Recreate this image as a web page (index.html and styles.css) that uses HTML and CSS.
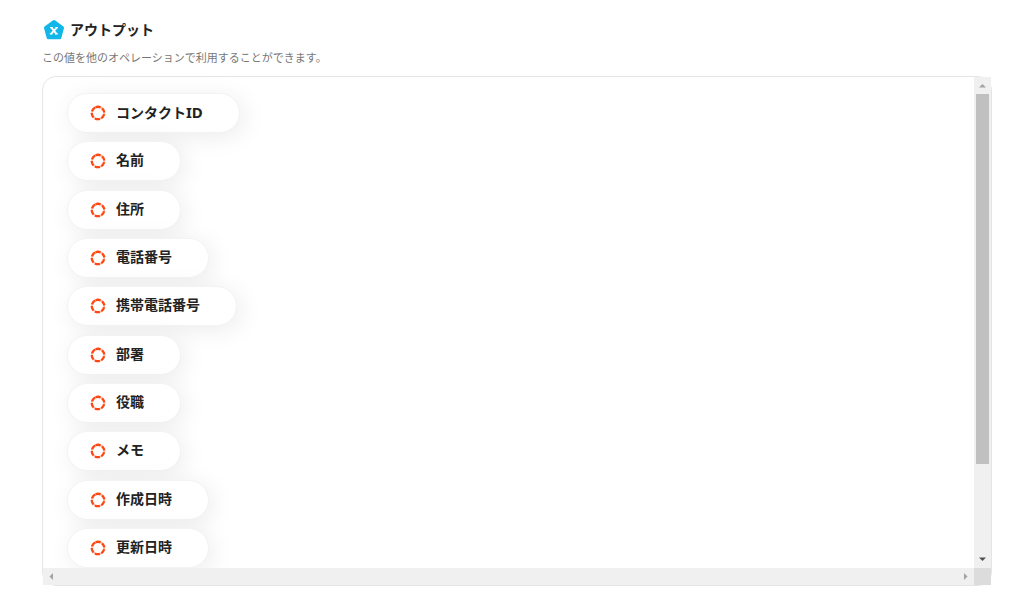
FILE: index.html
```html
<!DOCTYPE html>
<html lang="ja">
<head>
    <meta charset="UTF-8">
    <meta name="viewport" content="width=device-width, initial-scale=1.0">
    <title>アウトプット</title>
    <link rel="stylesheet" href="styles.css">
</head>
<body>
    <!-- shared ring icon -->
    <svg class="icon-defs" aria-hidden="true">
        <symbol id="ring" viewBox="0 0 16 16">
            <circle cx="8" cy="8" r="6.2" fill="none" stroke="#ffc4b2" stroke-width="2"/>
            <circle cx="8" cy="8" r="6.2" fill="none" stroke="#ff4713" stroke-width="2.3" stroke-dasharray="4.9 1.593" transform="rotate(-112 8 8)"/>
        </symbol>
    </svg>

    <main class="output-section">
        <header class="section-header">
            <svg class="section-icon" viewBox="0 0 22 22" aria-hidden="true">
                <path d="M11 2.5 L19.5 8.8 L16.8 18.8 H5.2 L2.5 8.8 Z" fill="#12b7e8" stroke="#12b7e8" stroke-width="3" stroke-linejoin="round"/>
                <path d="M8.4 8.6 L13.4 14.8 M13.8 8.6 L8 14.8" fill="none" stroke="#fff" stroke-width="1.9"/>
                <path d="M7 8.6 H9.8 M12.4 8.6 H14.8 M6.8 14.8 H9.4 M12 14.8 H14.8" fill="none" stroke="#fff" stroke-width="1.3"/>
            </svg>
            <h1 class="section-title">アウトプット</h1>
        </header>
        <p class="section-description">この値を他のオペレーションで利用することができます。</p>

        <div class="output-panel">
            <ul class="output-list">
                <li class="chip"><svg class="chip-icon"><use href="#ring"/></svg><span>コンタクト<span class="latin">ID</span></span></li>
                <li class="chip"><svg class="chip-icon"><use href="#ring"/></svg>名前</li>
                <li class="chip"><svg class="chip-icon"><use href="#ring"/></svg>住所</li>
                <li class="chip"><svg class="chip-icon"><use href="#ring"/></svg>電話番号</li>
                <li class="chip"><svg class="chip-icon"><use href="#ring"/></svg>携帯電話番号</li>
                <li class="chip"><svg class="chip-icon"><use href="#ring"/></svg>部署</li>
                <li class="chip"><svg class="chip-icon"><use href="#ring"/></svg>役職</li>
                <li class="chip"><svg class="chip-icon"><use href="#ring"/></svg>メモ</li>
                <li class="chip"><svg class="chip-icon"><use href="#ring"/></svg>作成日時</li>
                <li class="chip"><svg class="chip-icon"><use href="#ring"/></svg>更新日時</li>
            </ul>
            <div class="scrollbar vertical">
                <button class="scroll-button disabled" aria-label="上へスクロール"><svg viewBox="0 0 17 17"><path d="M5 10.5 L8.5 7 L12 10.5 Z"/></svg></button>
                <div class="scroll-track"><div class="scroll-thumb"></div></div>
                <button class="scroll-button" aria-label="下へスクロール"><svg viewBox="0 0 17 17"><path d="M5 6.5 L8.5 10 L12 6.5 Z"/></svg></button>
            </div>
            <div class="scrollbar horizontal">
                <button class="scroll-button disabled" aria-label="左へスクロール"><svg viewBox="0 0 17 17"><path d="M10 5 L6.5 8.5 L10 12 Z"/></svg></button>
                <button class="scroll-button disabled" aria-label="右へスクロール"><svg viewBox="0 0 17 17"><path d="M7 5 L10.5 8.5 L7 12 Z"/></svg></button>
            </div>
            <div class="scroll-corner"></div>
        </div>
    </main>
</body>
</html>
```

FILE: styles.css
```css
:root {
    --text-primary: #222; --text-secondary: #777;
    --panel-border: #e5e5e5; --chip-border: #f3f3f3;
    --scroll-track: #f0f0f0; --scroll-thumb: #c0c0c0; --scroll-corner: #dcdcdc;
}
* { margin: 0; padding: 0; box-sizing: border-box; }
body { font-family: "Noto Sans", "Noto Sans CJK JP", sans-serif; background-color: #fff; color: var(--text-primary); }
.icon-defs { display: none; }

.output-section { padding: 18px 21px 18px 42px; }
.section-header { display: flex; align-items: center; gap: 5px; height: 24px; padding-left: 1px; }
.section-icon { width: 22px; height: 22px; }
.section-title { font-size: 14px; line-height: 24px; font-weight: 700; }
.section-description { font-size: 11px; line-height: 20px; margin: 6px 0 8px; color: var(--text-secondary); }

/* Scrollable panel */
.output-panel {
    display: grid; grid-template-columns: 1fr 17px; grid-template-rows: auto 17px;
    border: 1px solid var(--panel-border); border-radius: 14px;
}
.output-list {
    display: flex; flex-direction: column; align-items: flex-start; justify-content: space-between;
    height: 491px; padding: 16px 24px 0; list-style: none; overflow: hidden;
    border-top-left-radius: 13px;
}
.chip {
    display: flex; align-items: center; gap: 10px; height: 40px; padding: 0 36px 2px 22px;
    border: 1px solid var(--chip-border); border-radius: 20px; background-color: #fff;
    box-shadow: 4px 4px 24px rgba(0,0,0,0.08);
    font-size: 14px; line-height: 20px; font-weight: 700; white-space: nowrap;
}
.chip-icon { width: 16px; height: 16px; margin-top: 2px; }
.latin { font-size: 15px; }

/* Scrollbars */
.scrollbar { display: flex; background-color: var(--scroll-track); }
.scrollbar.vertical { flex-direction: column; }
.scrollbar.horizontal { justify-content: space-between; }
.scroll-button { width: 17px; height: 17px; border: none; background: none; fill: #505050; }
.scroll-button.disabled { fill: #a3a3a3; }
.scroll-button svg { display: block; width: 17px; height: 17px; }
.scroll-track { flex: 1; padding: 0 2px; }
.scroll-thumb { height: 81%; background-color: var(--scroll-thumb); }
.scroll-corner { background-color: var(--scroll-corner); }
```
